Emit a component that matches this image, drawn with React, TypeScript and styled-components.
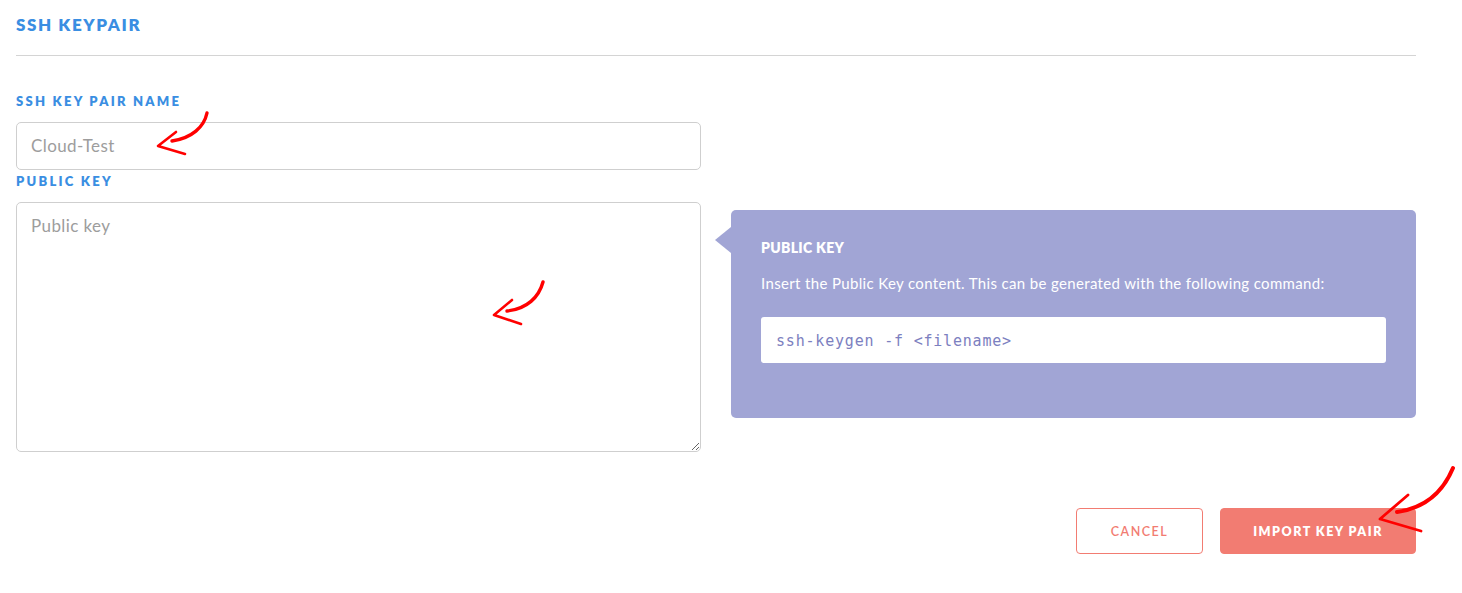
import styled, { createGlobalStyle } from 'styled-components';

const GlobalStyle = createGlobalStyle`
  html, body {
    margin: 0;
    padding: 0;
    background: #ffffff;
  }
  body {
    font-family: 'Lato', 'Open Sans', sans-serif;
  }
`;
const Page = styled.div`
  position: relative;
  width: 1462px;
  height: 593px;
  box-sizing: border-box;
  padding: 0 46px 0 16px;
  overflow: hidden;
`;
const Header = styled.header`
  padding: 15px 0 20px;
  border-bottom: 1px solid #d4d4d4;
`;
const Title = styled.h1`
  margin: 0;
  font-size: 17px;
  line-height: 20px;
  font-weight: 800;
  letter-spacing: 1.6px;
  color: #3a8ee2;
`;
const Form = styled.form`
  display: flex;
  flex-direction: column;
  padding-top: 37px;
`;
const Label = styled.label`
  display: block;
  margin-bottom: 13px;
  font-size: 13px;
  line-height: 16px;
  font-weight: 800;
  letter-spacing: 2.25px;
  color: #3a8ee2;
`;
const Field = styled.div`
  width: 685px;
  display: flex;
  flex-direction: column;
`;
const TextInput = styled.input`
  box-sizing: border-box;
  width: 100%;
  height: 48px;
  margin-bottom: 3px;
  padding: 0 14px 2px;
  border: 1px solid #cfcfcf;
  border-radius: 5px;
  font-family: 'Lato', 'Open Sans', sans-serif;
  font-size: 17px;
  letter-spacing: 0.4px;
  color: #333;
  outline: none;
  &::placeholder { color: #9d9d9d; }
`;
const TextArea = styled.textarea`
  box-sizing: border-box;
  width: 100%;
  height: 250px;
  padding: 13px 14px;
  border: 1px solid #cfcfcf;
  border-radius: 5px;
  font-family: 'Lato', 'Open Sans', sans-serif;
  font-size: 17px;
  letter-spacing: 0.4px;
  line-height: 20px;
  color: #333;
  caret-color: #000;
  outline: none;
  display: block;
  &::placeholder { color: #9d9d9d; }
`;
const Row = styled.div`
  display: flex;
  align-items: flex-start;
  gap: 30px;
`;
const InfoBox = styled.aside`
  position: relative;
  box-sizing: border-box;
  width: 685px;
  margin-top: 37px;
  padding: 30px 30px 55px;
  background: #a1a5d5;
  border-radius: 5px;
  color: #ffffff;
  &::before {
    content: '';
    position: absolute;
    left: -16px;
    top: 17px;
    border-style: solid;
    border-width: 13px 16px 13px 0;
    border-color: transparent #a1a5d5 transparent transparent;
  }
`;
const InfoTitle = styled.h3`
  margin: 0;
  font-size: 14px;
  line-height: 16px;
  font-weight: 800;
  letter-spacing: 0.3px;
`;
const InfoText = styled.p`
  margin: 17px 0 0;
  font-size: 15px;
  line-height: 20px;
  letter-spacing: 0.35px;
`;
const Code = styled.code`
  display: block;
  margin-top: 24px;
  height: 46px;
  box-sizing: border-box;
  padding: 0 15px;
  background: #ffffff;
  border-radius: 3px;
  font-family: 'DejaVu Sans Mono', 'Liberation Mono', monospace;
  font-size: 15px;
  line-height: 48px;
  letter-spacing: 0.8px;
  color: #7c80c0;
`;
const Actions = styled.div`
  display: flex;
  justify-content: flex-end;
  gap: 17px;
  margin-top: 56px;
`;
const Button = styled.button<{ $primary?: boolean }>`
  box-sizing: border-box;
  height: 46px;
  padding: 0;
  width: ${p => (p.$primary ? '196px' : '127px')};
  border: 1px solid #f27c72;
  border-radius: 4px;
  background: ${p => (p.$primary ? '#f27c72' : '#ffffff')};
  color: ${p => (p.$primary ? '#ffffff' : '#f27c72')};
  font-family: 'Lato', 'Open Sans', sans-serif;
  font-size: 12.5px;
  font-weight: ${p => (p.$primary ? 800 : 600)};
  letter-spacing: 1.5px;
  cursor: pointer;
`;
const Overlay = styled.svg`
  position: absolute;
  left: 0;
  top: 0;
  width: 1462px;
  height: 593px;
  pointer-events: none;
`;

function Arrows() {
  return (
    <Overlay viewBox="0 0 1462 593">
      <g fill="none" stroke="#f00" strokeLinecap="round" strokeLinejoin="round">
        <path d="M207 113 C204 127 192 138 172 141" strokeWidth="3.4" />
        <path d="M176 132 L158 146 L185 154" strokeWidth="2.6" />
        <path d="M543 282 C539 297 527 309 507 311" strokeWidth="3.4" />
        <path d="M512 300 L494 315 L521 324" strokeWidth="2.6" />
        <path d="M1453 468 C1443 492 1425 508 1397 512" strokeWidth="4" />
        <path d="M1408 495 L1380 519 L1421 531" strokeWidth="2.8" />
      </g>
    </Overlay>
  );
}

function App() {
  return (
    <Page>
      <GlobalStyle />
      <Header><Title>SSH KEYPAIR</Title></Header>
      <Form onSubmit={e => e.preventDefault()}>
        <Field>
          <Label htmlFor="kp-name">SSH KEY PAIR NAME</Label>
          <TextInput id="kp-name" placeholder="Cloud-Test" />
        </Field>
        <Row>
          <Field>
            <Label htmlFor="kp-key">PUBLIC KEY</Label>
            <TextArea id="kp-key" placeholder="Public key" autoFocus />
          </Field>
          <InfoBox>
            <InfoTitle>PUBLIC KEY</InfoTitle>
            <InfoText>Insert the Public Key content. This can be generated with the following command:</InfoText>
            <Code>ssh-keygen -f &lt;filename&gt;</Code>
          </InfoBox>
        </Row>
        <Actions>
          <Button type="button">CANCEL</Button>
          <Button type="submit" $primary>IMPORT KEY PAIR</Button>
        </Actions>
      </Form>
      <Arrows />
    </Page>
  );
}

export default App;
